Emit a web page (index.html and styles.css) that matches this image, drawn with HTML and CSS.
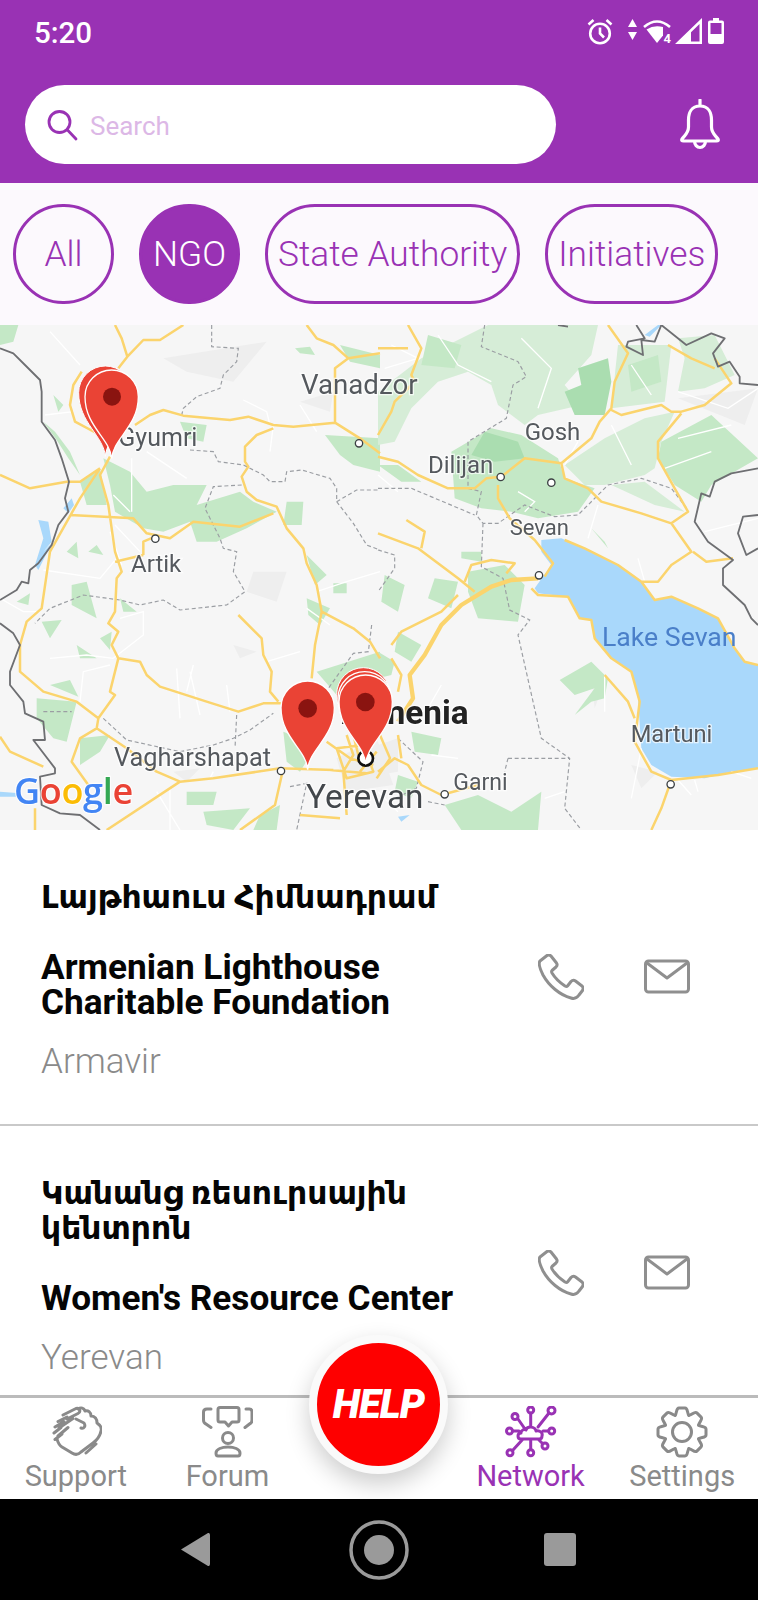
FILE: index.html
```html
<!DOCTYPE html>
<html lang="en">
<head>
    <meta charset="UTF-8">
    <meta name="viewport" content="width=device-width, initial-scale=1.0">
    <title>Network</title>
    <link rel="stylesheet" href="styles.css">
</head>
<body>
<div class="screen">
    <header class="top">
        <div class="status">
            <span class="time">5:20</span>
            <div class="status-icons">
                <svg class="st-alarm" width="26" height="27" viewBox="0 0 26 27"><circle cx="13" cy="15.500" r="9.800"/><path d="M13 9.500V15.500L17 19.500M1.500 6.500 6.500 2M24.500 6.500 19.500 2"/></svg>
                <svg class="st-fill st-arrows" width="9" height="21" viewBox="0 0 9 21"><path d="M4.500 0 9 8H0ZM4.500 21 0 13H9Z"/></svg>
                <svg class="st-wifi" width="30" height="28" viewBox="0 0 30 28"><path d="M1 8Q14 -3 27 8"/><path class="solid" d="M14 24 3.500 10.500Q11 5.500 20 8V16.500Z"/><text x="20.500" y="24">4</text></svg>
                <svg class="st-fill st-signal" width="27" height="26" viewBox="0 0 27 26"><path fill-rule="evenodd" d="M0 26 27 0V26ZM16 23.500H24.500V6L16 14.200Z"/></svg>
                <svg class="st-fill st-battery" width="16" height="26" viewBox="0 0 16 26"><path fill-rule="evenodd" d="M5 0H11V2.500H14Q16 2.500 16 4.500V24Q16 26 14 26H2Q0 26 0 24V4.500Q0 2.500 2 2.500H5ZM2.500 5V16H13.500V5Z"/></svg>
            </div>
        </div>
        <div class="search-row">
            <div class="search">
                <svg class="search-ico" width="32" height="32" viewBox="0 0 32 32"><circle cx="12.500" cy="13" r="10.500"/><path d="M20.500 21 29 30"/></svg>
                <span>Search</span>
            </div>
            <svg class="bell" width="42" height="51" viewBox="0 0 42 51"><path d="M21 1V7C12.500 7 9.500 14 9.500 21V28C9.500 34 6 36 3 40Q2 42 4.500 42H37.500Q40 42 39 40C36 36 32.500 34 32.500 28V21C32.500 14 29.500 7 21 7M15.500 42A5.500 6.500 0 0 0 26.500 42"/></svg>
        </div>
    </header>

    <nav class="chips">
        <a class="chip round">All</a>
        <a class="chip round active">NGO</a>
        <a class="chip">State Authority</a>
        <a class="chip">Initiatives</a>
    </nav>

    <svg class="map" width="758" height="505" viewBox="0 0 2274 1515">
        <rect class="land" width="2274" height="1515"/>

        <g class="relief">
            <path d="M490 100 800 50 700 170 560 140ZM900 230 1000 200 990 260ZM760 740 860 740 830 830 740 800ZM700 960 770 980 720 1000ZM1010 1300 1130 1240 1180 1380 1040 1400ZM520 1340 600 1330 560 1370Z"/>
            <g transform="translate(1134 0)">
                <path d="M900 220 1140 190 1100 300ZM760 1320 840 1340 790 1390ZM640 1060 680 1070 650 1150ZM0 1260 60 1240 60 1340 0 1350Z"/>
            </g>
        </g>

        <g class="forest">
            <path d="M130 290 170 345 205 400 240 450 210 380 165 320ZM310 400 390 440 440 500 520 480 620 480 590 540 720 500 760 530 830 560 740 610 650 650 590 650 570 590 490 620 430 610 345 560 330 480ZM240 470 300 430 320 540 260 540ZM860 530 910 530 905 600 850 600ZM50 830 90 805 85 840ZM215 780 260 770 290 880 215 840ZM125 890 185 885 150 940ZM200 680 230 650 235 700ZM265 680 290 660 310 690ZM360 820 410 860 370 860ZM110 1120 230 1130 200 1250 160 1240 110 1180ZM150 1080 210 1065 235 1115ZM240 1240 330 1230 300 1280 240 1320ZM920 690 980 750 945 780ZM920 820 990 850 960 900 925 870ZM975 330 1140 340 1140 440 1060 420 1020 390ZM1020 60 1140 90 1140 130 1050 110ZM885 70 930 65 945 90 900 85ZM560 1400 650 1400 640 1440 560 1440ZM610 1460 750 1450 700 1515 620 1500ZM950 1040 1140 980 1140 1060 1010 1110ZM850 1220 950 1260 900 1340 860 1310ZM230 960 290 1000 240 1000ZM0 0 55 0 40 50 0 60ZM780 1470 840 1440 830 1515 760 1515ZM1000 775 1040 775 1040 805 1000 805ZM540 290 620 300 610 350 560 340ZM180 1130 230 1130 190 1180ZM160 210 190 240 175 260ZM300 940 335 920 330 975Z"/>
            <g transform="translate(1134 0)">
                <path class="forest-pale" d="M330 0 660 0 640 90 560 180 610 240 480 270 440 300 360 240 340 180 270 140 180 170 100 250 50 350 0 360 0 200 130 100ZM560 420 680 340 800 280 890 260 850 350 830 430 800 450 680 480 620 480ZM700 480 800 470 920 560 830 540ZM900 40 1010 30 1070 150 980 190 900 200 920 100ZM720 60 880 60 860 230 700 250Z"/>
                <path d="M850 350 1000 270 1140 400 1000 480 970 530 890 480 840 400ZM220 380 340 310 430 330 540 400 560 460 650 490 600 560 480 580 400 560 310 550 230 520ZM270 740 380 720 440 780 420 890 300 880 270 800ZM250 680 310 680 310 710 250 700ZM170 760 240 770 220 850 150 820ZM20 750 80 780 60 860 10 830ZM545 1065 640 1010 690 1060 680 1120 640 1130 590 1170 650 1090 590 1110ZM60 920 130 960 100 1010 50 980ZM0 980 50 1010 40 1050 0 1060ZM200 1440 300 1410 400 1460 490 1400 480 1515 250 1515ZM100 1220 190 1240 180 1290 110 1280ZM640 610 680 650 690 670ZM60 1350 120 1370 100 1420 50 1400ZM770 950 790 1040 760 1020ZM0 420 60 420 130 470 70 470ZM150 30 250 60 230 130 130 120ZM750 120 840 90 850 170 760 200Z"/>
                <path class="forest-deep" d="M600 130 690 100 700 170 680 270 590 270 560 200 610 180ZM320 320 420 350 440 400 350 410 280 390Z"/>
            </g>
        </g>

        <g class="water">
            <path d="M115 585 145 590 155 650 130 680 155 655 115 735 105 720 130 640ZM190 550 215 520 222 540 205 565ZM0 1400 60 1405 60 1415 0 1415Z"/>
            <g transform="translate(1134 0)">
                <path d="M490 645 550 640 620 670 720 720 790 770 830 825 880 815 960 850 1020 880 1070 970 1100 1010 1140 1020 1140 1330 1060 1340 980 1360 880 1355 820 1320 790 1270 780 1120 760 1040 700 1000 650 940 640 885 605 880 570 815 480 805 470 790 520 720 490 680ZM800 30 840 0 850 0 815 35ZM60 1475 95 1470 70 1490Z"/>
            </g>
        </g>

        <g class="minor">
            <path d="M150 20 240 120M135 270 220 260M395 400 395 560M440 380 560 460M330 620 365 720M130 735 300 760 350 700M345 600 420 680M360 880 430 860 430 930 340 1000M150 1000 260 990 340 1000M240 1130 250 1040 330 1020M600 1170 570 1040M540 1180 530 1030M680 1080 690 1160M800 1010 900 980M950 800 1040 770 1140 740M920 850 990 900M820 300 810 380M730 225 800 260 810 300M900 240 950 320M340 510 390 560M510 1390 510 1515M470 1400 540 1515M0 820 70 860 120 860M640 1340 630 1360M580 1020 560 1100"/>
            <g transform="translate(1134 0)">
                <path d="M40 60 120 100 20 130M0 450 60 500M420 500 470 530 440 560M660 540 630 640M790 1270 760 1420M680 1050 680 1160M900 200 1050 250 1140 190M980 620 1140 580M800 770 780 700M190 1080 150 1150 90 1180M500 1420 560 1400M1060 1340 1120 1360M160 1290 240 1300M0 1400 60 1460M900 1365 940 1410M950 1365 960 1400M180 30 240 120 340 170M430 40 520 130 480 250M760 120 820 210M600 350 560 420M700 300 760 420M900 340 1060 300M860 430 1000 380"/>
            </g>
        </g>

        <g class="dashed">
            <path d="M635 0 635 65 715 70 710 110 670 150 660 190 590 215 550 250 545 270M570 375 640 380 655 410 730 420 790 450 810 470 855 470 860 440 905 435 990 460 1010 490 1010 530 1060 595 1100 660 1140 675M1010 530 1070 495 1140 495M725 480 640 485 615 550 660 640 670 670 710 680 700 740 735 800 680 840 540 855 490 825 420 840 360 825 250 810 150 850 105 895M130 1160 215 1160M310 1180 380 1245 540 1280 640 1260 700 1240 750 1215 820 1165M710 1170 705 1270M1115 900 1105 980 1060 985 985 1090M870 1385 920 1375 890 1515"/>
            <g transform="translate(1134 0)">
                <path d="M320 0 310 65 420 110 445 155 405 180 385 280 270 350 270 490 310 500 295 570 315 595 360 595 440 540 530 575 600 570 690 480 790 460 880 490 930 555M0 490 100 490 290 570M315 595 310 725 375 760 395 855 455 885 420 930 490 1240 575 1300 560 1450 610 1515M390 1300 575 1300M390 1300 380 1340M0 675 50 690 50 730 0 800M60 1240 135 1310 115 1390 50 1420M150 1430 200 1440"/>
            </g>
        </g>

        <g class="road">
            <path d="M345 0 365 40 382 95 355 130M382 95 430 45 480 45 550 0M405 300 450 270 490 255 550 272 690 285 745 275 820 300 880 305 1005 293 1080 340 1140 385M1005 293 1005 130 1045 100 1000 60 950 40 920 0M1045 100 1140 85M820 310 770 330 735 365 735 410 745 425 725 455 740 500 770 525 830 545 860 610 910 670 920 715 950 780 965 860 945 960 935 1060M330 395 300 450 325 540 345 680 365 740 350 760 345 860 325 895 355 920 335 960 355 1000 330 1100 345 1110 295 1180 290 1210 240 1240 215 1310 265 1380M355 1000 420 1010 440 1050 480 1085 620 1130 715 1160 790 1135 850 1135M300 430 240 470 200 470 90 490 0 450M300 430 240 520 150 680 125 850 80 890 60 960 60 1040 130 1100 230 1130 295 1180M210 570 400 580 440 625 510 640 580 590 720 605 820 565M430 690 430 650 465 635M345 710 430 690M290 1210 380 1270 470 1340 540 1370 640 1360 840 1330 1000 1335M540 1370 320 1515M850 1330 825 1440 720 1515M715 870 785 940 790 990 815 1040 810 1100 835 1130M0 1235 30 1280 130 1325M105 1515 105 1450M965 860 1060 910 1110 950 1140 1000M245 140 220 180 210 240 225 290 300 330M990 1335 1100 1345M1040 1230 1060 1290 1030 1340M1100 1210 1060 1230 1075 1290M980 1250 1050 1300 1120 1320M1030 1340 1040 1470M1080 1340 1130 1280M900 1470 1020 1480M1010 1270 1090 1260 1120 1340 1040 1360 1010 1270M1140 1230 1170 1300 1130 1360"/>
            <g transform="translate(1134 0)">
                <path d="M0 395 60 410 120 450 210 490 290 490 325 460 370 455 440 400 550 415 640 340 665 290 700 250 710 170 750 85 690 0M550 415 560 460 630 490 670 530 790 565 880 595 940 680 880 720 840 770 790 770M945 680 985 710 1065 700M700 255 730 270 850 240 880 260 910 260 980 240 1060 175 1010 100M880 595 930 560 890 490 840 400 840 350 910 265M360 480 360 520 395 580 470 645 525 715 500 755M560 645 620 670 720 720 790 770 830 825 880 815 960 850 1020 880 1070 970 1100 1010 1140 1020M460 790 480 810 570 815 605 880 640 885 650 940 700 1000 760 1040 785 1130 770 1250 820 1340 880 1365 1020 1350 1140 1330M680 1050 750 1130 770 1180M880 1365 850 1450 820 1515M0 625 120 670 240 760 290 800M85 585 140 620 130 670M90 0 130 70 100 150 110 170M0 330 40 260 50 230 100 180M0 70 90 70M260 770 280 720 340 705 410 715 385 745M40 960 70 920 190 860 240 810M0 1340 50 1300 90 1320 130 1380 190 1410 300 1380M60 1230 70 1300M870 60 940 100 1010 130M40 1000 70 1050 60 1100"/>
                <path class="highway" d="M480 760 400 765 340 785 250 840 190 900 140 990 95 1050 105 1120 60 1190"/>
            </g>
        </g>

        <g class="border">
            <path d="M0 70 40 85 75 120 120 165 125 200 125 290 165 345 185 400 207 470 195 520 205 560 175 600 155 660 115 715 90 735 85 775 65 770 50 795 0 825M0 895 40 925 60 960 30 1040 30 1080 70 1130 75 1165 130 1190 135 1245 100 1245 165 1330 165 1345 120 1355 125 1440 180 1465 240 1470 300 1515"/>
            <g transform="translate(1134 0)">
                <path d="M540 0 570 5M775 0 800 40 750 50 745 65 795 90 790 45 830 50 850 0M850 0 925 60 1000 25 1040 40 1005 85 1020 125 1055 110 1085 155 1085 175 1140 180M1140 430 1060 445 1010 470 995 515 970 505 950 590 990 650 1065 705 1035 730 1035 780 1100 840 1120 880 1140 900M1140 570 1095 575 1080 625 1105 690 1140 670"/>
            </g>
        </g>

        <g class="dots">
            <circle cx="1077" cy="355" r="11"/>
            <circle cx="466" cy="641" r="11"/>
            <circle cx="843" cy="1338" r="11"/>
            <circle cx="1502" cy="456" r="11"/>
            <circle cx="1654" cy="473" r="11"/>
            <circle cx="1617" cy="751" r="11"/>
            <circle cx="2012" cy="1378" r="11"/>
            <circle cx="1334" cy="1408" r="11"/>
        </g>
        <circle class="capital" cx="1097" cy="1300" r="22"/>

        <text class="lbl vanadzor" x="903" y="208">Vanadzor</text>
        <text class="lbl sm" x="355" y="362">Gyumri</text>
        <text class="lbl xs" x="393" y="742">Artik</text>
        <text class="lbl vagh" x="342" y="1322">Vagharshapat</text>
        <text class="lbl big" x="918" y="1448">Yerevan</text>
        <text class="lbl country" x="1406" y="1198">Armenia</text>
        <text class="lbl xs" x="1574" y="345">Gosh</text>
        <text class="lbl xs" x="1284" y="443">Dilijan</text>
        <text class="lbl tiny" x="1529" y="630">Sevan</text>
        <text class="lbl lake" x="1806" y="962">Lake Sevan</text>
        <text class="lbl martuni" x="1892" y="1252">Martuni</text>
        <text class="lbl garni" x="1360" y="1394">Garni</text>

        <text class="logo" x="42" y="1437"><tspan class="g-blue">G</tspan><tspan class="g-red">o</tspan><tspan class="g-yellow">o</tspan><tspan class="g-blue">g</tspan><tspan class="g-green">l</tspan><tspan class="g-red">e</tspan></text>

        <g class="pin-back"><path transform="translate(316 203)" d="M0 192C-4 130 -80 90 -80 0A80 80 0 0 1 80 0C80 90 4 130 0 192Z"/></g>
        <g class="pin"><path transform="translate(335 215)" d="M0 186C-4 125 -80 90 -80 0A80 80 0 0 1 80 0C80 90 4 125 0 186Z"/><circle class="pin-dot" cx="336" cy="215" r="27"/></g>
        <g class="pin-back"><path transform="translate(1090 1108)" d="M0 190C-4 130 -80 90 -80 0A80 80 0 0 1 80 0C80 90 4 130 0 190Z"/></g>
        <g class="pin"><path transform="translate(1094 1120)" d="M0 190C-4 130 -80 90 -80 0A80 80 0 0 1 80 0C80 90 4 130 0 190Z"/></g>
        <g class="pin"><path transform="translate(923 1148)" d="M0 186C-4 125 -80 90 -80 0A80 80 0 0 1 80 0C80 90 4 125 0 186Z"/><circle class="pin-dot" cx="923" cy="1150" r="28"/></g>
        <g class="pin"><path transform="translate(1097 1130)" d="M0 188C-4 125 -80 90 -80 0A80 80 0 0 1 80 0C80 90 4 125 0 188Z"/><circle class="pin-dot" cx="1096" cy="1131" r="28"/></g>
    </svg>

    <main class="list">
        <section class="item">
            <div class="info">
                <h3 class="hy">Լայթհաուս Հիմնադրամ</h3>
                <h3>Armenian Lighthouse Charitable Foundation</h3>
                <p>Armavir</p>
            </div>
            <div class="actions">
                <svg class="act" width="46" height="46" viewBox="0 0 46 46"><path d="M9 1.500C10.500.5 12 1 13 2L18.500 9C19.500 10.500 19 12 18 13L14 16.500C13.500 17 13.500 18 14 19 17 24 21 28 27 32 28 32.500 29 32.500 29.500 32L33 27.500C34 26.500 36 26 37.500 27L44 32C45.500 33.500 45.500 35 44.500 36.500L41 41C39 44 36 45 33 44 22 41 11 32 5 21 2 15 .5 9 2 7Z"/></svg>
                <svg class="act" width="46" height="46" viewBox="0 0 46 46"><rect x="1.500" y="7" width="43" height="31" rx="3"/><path d="M3 9 23 24 43 9"/></svg>
            </div>
        </section>
        <section class="item">
            <div class="info">
                <h3 class="hy">Կանանց ռեսուրսային կենտրոն</h3>
                <h3>Women's Resource Center</h3>
                <p>Yerevan</p>
            </div>
            <div class="actions">
                <svg class="act" width="46" height="46" viewBox="0 0 46 46"><path d="M9 1.500C10.500.5 12 1 13 2L18.500 9C19.500 10.500 19 12 18 13L14 16.500C13.500 17 13.500 18 14 19 17 24 21 28 27 32 28 32.500 29 32.500 29.500 32L33 27.500C34 26.500 36 26 37.500 27L44 32C45.500 33.500 45.500 35 44.500 36.500L41 41C39 44 36 45 33 44 22 41 11 32 5 21 2 15 .5 9 2 7Z"/></svg>
                <svg class="act" width="46" height="46" viewBox="0 0 46 46"><rect x="1.500" y="7" width="43" height="31" rx="3"/><path d="M3 9 23 24 43 9"/></svg>
            </div>
        </section>
    </main>

    <footer class="tabs">
        <a class="tab">
            <svg class="tab-ico" width="52" height="52" viewBox="0 0 52 52"><path d="M28 3C31 1 34 2 35 5 38 4 41 6 41 10 45 10 47 13 47 17 50 19 52 22 51 25 50 30 47 34 43 37L31 46C28 49 25 49 22 47L12 41C9 39 8 37 7 33M26 13 34 17C36 20 34 23 31 22M36 47 46 38"/><path d="M13 9 26 2.500C30 1.500 31 6 28 7.500L17 13M8 15.500 17 11M9 22 23 12.500M5 21 14 15.500M8 30 18 21.500M4 27 11 21.500M5 33.500 12 28"/></svg>
            <span>Support</span>
        </a>
        <a class="tab">
            <svg class="tab-ico" width="52" height="52" viewBox="0 0 52 52"><path d="M19 1.500H36Q38 1.500 38 3.500V14Q38 16 36 16H31L27.500 20 24 16H19Q17 16 17 14V3.500Q17 1.500 19 1.500ZM10 3H6Q2.500 3 2.500 6V14Q2.500 17 5 18L10 21.500M45 3H48.500Q51 3 51 6V14Q51 17 48.500 18L44 21.500M17 50Q15 50 15 47C15 43 21 41 27 41 33 41 39 43 39 47Q39 50 37 50Z"/><circle cx="27" cy="32" r="5.500"/></svg>
            <span>Forum</span>
        </a>
        <span class="tab"></span>
        <a class="tab active">
            <svg class="tab-ico" width="52" height="52" viewBox="0 0 52 52"><path d="M16 33C12 33 12 27 16 27 16 24 19 23 21 24 22 20 30 20 31 25 35 24 38 27 37 30 37 32 36 33 34 33ZM25.700 7V21M33 21 44 7M13 13 20 23M8 25H14M38 25H43M37 37 33 33M25.700 33V43M18 33 8 44"/><circle cx="25.700" cy="4" r="3"/><circle cx="46.500" cy="4.500" r="3.500"/><circle cx="10" cy="10.500" r="3"/><circle cx="46.700" cy="25" r="3"/><circle cx="4.500" cy="25" r="3"/><circle cx="40" cy="40" r="3"/><circle cx="25.700" cy="46.700" r="3"/><circle cx="5" cy="46.700" r="3"/></svg>
            <span>Network</span>
        </a>
        <a class="tab">
            <svg class="tab-ico" width="52" height="52" viewBox="0 0 52 52"><defs><path id="tooth" d="M19.100 9.400C21 7 20 2 23 2H29C32 2 31 7 32.900 9.400"/></defs><use href="#tooth"/><use href="#tooth" transform="rotate(45 26 26)"/><use href="#tooth" transform="rotate(90 26 26)"/><use href="#tooth" transform="rotate(135 26 26)"/><use href="#tooth" transform="rotate(180 26 26)"/><use href="#tooth" transform="rotate(225 26 26)"/><use href="#tooth" transform="rotate(270 26 26)"/><use href="#tooth" transform="rotate(315 26 26)"/><circle cx="26" cy="26" r="9.500"/></svg>
            <span>Settings</span>
        </a>
        <button class="help">HELP</button>
    </footer>

    <div class="sysnav">
        <svg width="30" height="35" viewBox="0 0 30 35"><path d="M28 1 1 17.500 28 34Q30 34.500 30 32V3Q30 .5 28 1Z"/></svg>
        <svg class="sys-home" width="60" height="60" viewBox="0 0 60 60"><circle class="ring" cx="30" cy="30" r="28"/><circle cx="30" cy="30" r="15"/></svg>
        <span class="sys-square"></span>
    </div>
</div>
</body>
</html>
```

FILE: styles.css
```css
*{
    box-sizing: border-box;
}
body{
    margin: 0;
    background: #fff;
    font-family: Roboto, "DejaVu Sans", sans-serif;
}
.screen{
    width: 758px;
    height: 1600px;
    display: flex;
    flex-direction: column;
    overflow: hidden;
}

/* purple header */
.top{
    height: 183px;
    flex: none;
    background: #9932b4;
}
.status{
    height: 85px;
    padding: 18px 34px 0 34px;
    display: flex;
    justify-content: space-between;
    align-items: flex-start;
}
.time{
    color: #fff;
    font-size: 29.500px;
    font-weight: 500;
    line-height: 30px;
}
.status-icons{
    display: flex;
    align-items: flex-start;
}
.status-icons svg{
    display: block;
}
.st-alarm circle, .st-alarm path, .st-wifi path{
    fill: none;
    stroke: #fff;
    stroke-width: 2.600;
}
.st-wifi path.solid{
    fill: #fff;
    stroke: none;
}
.st-wifi text{
    fill: #fff;
    font-size: 13px;
    font-weight: 700;
}
.st-fill{
    fill: #fff;
}
.st-arrows{
    margin: 1px 6px 0 15px;
}
.st-wifi{
    margin: 1px 2px 0 0;
}
.st-signal{
    margin-right: 6px;
}

.search-row{
    display: flex;
    align-items: center;
    padding-left: 25px;
}
.search{
    width: 531px;
    height: 79px;
    border-radius: 40px;
    background: #fff;
    display: flex;
    align-items: center;
    padding-left: 22px;
    color: #dcb8e6;
    font-size: 26px;
}
.search span{
    margin-left: 11px;
    margin-top: 2px;
}
.search-ico{
    fill: none;
    stroke: #9932b4;
    stroke-width: 2.800;
    stroke-linecap: round;
}
.bell{
    margin-left: 123px;
    margin-top: -1px;
    fill: none;
    stroke: #fff;
    stroke-width: 3.200;
    stroke-linecap: round;
}

/* filter chips */
.chips{
    height: 142px;
    flex: none;
    background: #fcf9fd;
    display: flex;
    align-items: center;
    gap: 25px;
    padding-left: 13px;
}
.chip{
    height: 100px;
    min-width: 101px;
    border: 3px solid #9932b4;
    border-radius: 50px;
    display: flex;
    align-items: center;
    justify-content: center;
    padding: 0 10px;
    color: #9932b4;
    font-size: 35.300px;
    font-weight: 300;
}
.chip.active{
    background: #9932b4;
    color: #fff;
}

/* map */
.map{
    display: block;
    flex: none;
    filter: blur(.4px);
}
.land{
    fill: #f6f6f6;
}
.relief path{
    fill: #eeeeee;
}
.forest path{
    fill: #c4e8c6;
}
.forest path.forest-pale{
    fill: #d6edd7;
}
.forest path.forest-deep{
    fill: #aaddb0;
}
.water path{
    fill: #a9d8fb;
}
.minor path{
    fill: none;
    stroke: #fff;
    stroke-width: 4;
}
.dashed path{
    fill: none;
    stroke: #9b9ea3;
    stroke-width: 3.500;
    stroke-dasharray: 12 8;
}
.road path{
    fill: none;
    stroke: #fbd46d;
    stroke-width: 7.500;
    stroke-linejoin: round;
}
.road path.highway{
    stroke-width: 13;
}
.border path{
    fill: none;
    stroke: #6e6f72;
    stroke-width: 5.500;
    stroke-linejoin: round;
}
.dots circle{
    fill: #fff;
    stroke: #3c4043;
    stroke-width: 4;
}
.capital{
    fill: #fff;
    stroke: #111;
    stroke-width: 8;
}
.lbl{
    font-size: 72px;
    fill: #55595e;
    stroke: #fff;
    stroke-width: 8px;
    stroke-opacity: .7;
    paint-order: stroke;
}
.lbl.vanadzor{
    font-size: 83px;
}
.lbl.sm{
    font-size: 75px;
}
.lbl.vagh{
    font-size: 76px;
}
.lbl.tiny{
    font-size: 66px;
}
.lbl.martuni{
    font-size: 71px;
}
.lbl.garni{
    font-size: 69px;
}
.lbl.big{
    font-size: 100px;
    fill: #43474b;
}
.lbl.country{
    font-size: 100px;
    font-weight: 700;
    fill: #222;
    text-anchor: end;
}
.lbl.lake{
    font-size: 80px;
    fill: #4a7fc9;
    stroke: none;
}
.logo{
    font-family: "Open Sans", sans-serif;
    font-size: 108px;
    font-weight: 600;
    letter-spacing: -1px;
    stroke: #fff;
    stroke-width: 7px;
    stroke-opacity: .8;
    paint-order: stroke;
}
.g-blue{
    fill: #4285f4;
}
.g-red{
    fill: #ea4335;
}
.g-yellow{
    fill: #fbbc05;
}
.g-green{
    fill: #34a853;
}
.pin path{
    fill: #ea4335;
    stroke: #fff;
    stroke-width: 4;
}
.pin-back path{
    fill: #ea4335;
    stroke: #fff;
    stroke-width: 3;
}
.pin .pin-dot{
    fill: #8a1410;
}

/* list */
.list{
    flex: 1;
    min-height: 0;
    background: #fff;
    overflow: hidden;
}
.item{
    display: flex;
    align-items: center;
    padding-left: 41px;
    border-bottom: 2px solid #c9c9c9;
}
.item:last-child{
    border-bottom: none;
}
.info{
    width: 497px;
    padding: 50px 20px 42px 0;
    flex: none;
}
.info h3{
    margin: 0 0 35px;
    color: #050505;
    font-size: 35.200px;
    line-height: 35px;
    font-weight: 700;
}
.info h3.hy{
    font-size: 31.400px;
}
.info p{
    margin: -13px 0 0;
    color: #8a8a8a;
    font-size: 35px;
    line-height: 40px;
    font-weight: 300;
}
.actions{
    display: flex;
    gap: 60px;
}
.act{
    fill: none;
    stroke: #8f8f8f;
    stroke-width: 3;
    stroke-linejoin: round;
    stroke-linecap: round;
}

/* bottom tabs */
.tabs{
    height: 104px;
    flex: none;
    position: relative;
    display: grid;
    grid-template-columns: repeat(5, 1fr);
    border-top: 3px solid #bbb;
    background: #fff;
}
.tab{
    display: flex;
    flex-direction: column;
    align-items: center;
    padding-top: 8px;
    color: #8a8a8a;
    font-size: 29px;
    font-weight: 400;
    line-height: 36px;
}
.tab.active{
    color: #9932b4;
}
.tab-ico{
    fill: none;
    stroke: #8a8a8a;
    stroke-width: 3;
    stroke-linejoin: round;
    stroke-linecap: round;
}
.tab.active .tab-ico{
    stroke: #9932b4;
}
.help{
    position: absolute;
    left: 309px;
    top: -63px;
    width: 139px;
    height: 139px;
    border: 8px solid #fafafa;
    border-radius: 50%;
    background: #fe0000;
    box-shadow: 0 10px 24px rgba(0, 0, 0, .2);
    color: #fff;
    font-family: Roboto, sans-serif;
    font-size: 40px;
    font-weight: 900;
    font-style: italic;
    letter-spacing: -1px;
    padding: 0;
}

/* android nav */
.sysnav{
    height: 101px;
    flex: none;
    position: relative;
    background: #000;
    fill: #9a9a9a;
    display: flex;
    align-items: center;
    padding-left: 180px;
}
.sys-home{
    margin-left: 139px;
}
.ring{
    fill: none;
    stroke: #9a9a9a;
    stroke-width: 3.500;
}
.sys-square{
    margin-left: 135px;
    width: 32px;
    height: 33px;
    border-radius: 3px;
    background: #9a9a9a;
}
```
